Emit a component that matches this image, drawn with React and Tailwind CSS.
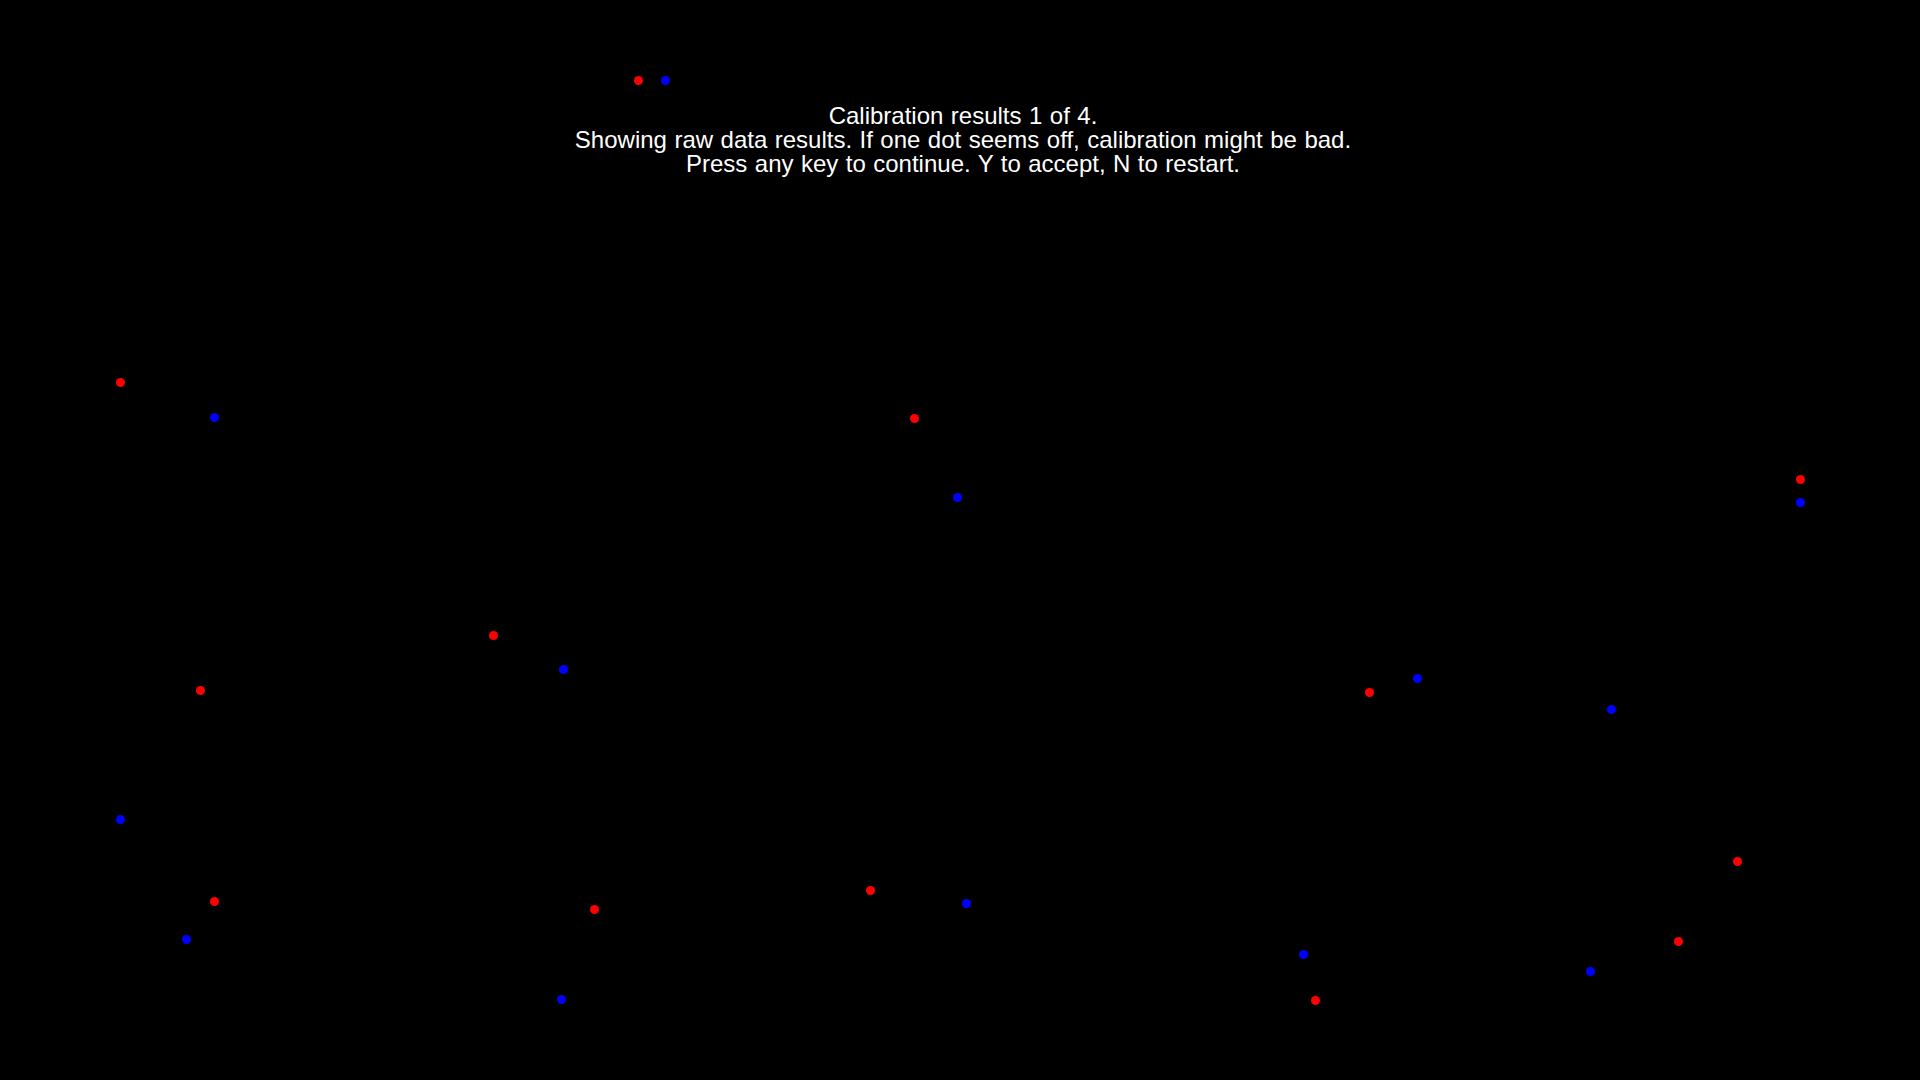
const dots = [
  // red: raw samples, left eye
  { x: 638.7, y: 80.3, c: "red" },
  { x: 120, y: 382.3, c: "red" },
  { x: 914.3, y: 418.3, c: "red" },
  { x: 1800, y: 479.3, c: "red" },
  { x: 493.3, y: 635, c: "red" },
  { x: 200, y: 690.3, c: "red" },
  { x: 1369, y: 692.3, c: "red" },
  { x: 214.3, y: 901.7, c: "red" },
  { x: 594.7, y: 909.7, c: "red" },
  { x: 870.3, y: 890, c: "red" },
  { x: 1737, y: 861.7, c: "red" },
  { x: 1678.7, y: 941, c: "red" },
  { x: 1315, y: 1000, c: "red" },
  // blue: raw samples, right eye
  { x: 665.3, y: 80.3, c: "blue" },
  { x: 214, y: 417, c: "blue" },
  { x: 957, y: 497, c: "blue" },
  { x: 1800, y: 502.7, c: "blue" },
  { x: 563.3, y: 669.3, c: "blue" },
  { x: 1417.7, y: 678.3, c: "blue" },
  { x: 1611.7, y: 709.7, c: "blue" },
  { x: 120, y: 819, c: "blue" },
  { x: 186.3, y: 939.3, c: "blue" },
  { x: 966, y: 903.7, c: "blue" },
  { x: 1303.7, y: 954.7, c: "blue" },
  { x: 1590.7, y: 971, c: "blue" },
  { x: 561, y: 999.7, c: "blue" },
];

const App = () => {
  return (
    <div className="relative w-[1920px] h-[1080px] bg-black overflow-hidden font-['Liberation_Sans',Arial,sans-serif]">
      <div className="pt-[104px] pl-[6px] text-center text-white text-[24px] leading-[24px] [word-spacing:0.8px]">
        <p>Calibration results 1 of 4.</p>
        <p>Showing raw data results. If one dot seems off, calibration might be bad.</p>
        <p>Press any key to continue. Y to accept, N to restart.</p>
      </div>

      {/* calibration samples, placed on the screen canvas */}
      {dots.map((d, i) => (
        <div
          key={i}
          className={d.c === "red" ? "absolute w-[9px] h-[9px] rounded-full bg-[#ff0000]" : "absolute w-[9px] h-[9px] rounded-full bg-[#0000ff]"}
          style={{ left: d.x - 4.5, top: d.y - 4.5 }}
        />
      ))}
    </div>
  );
};

export default App;
